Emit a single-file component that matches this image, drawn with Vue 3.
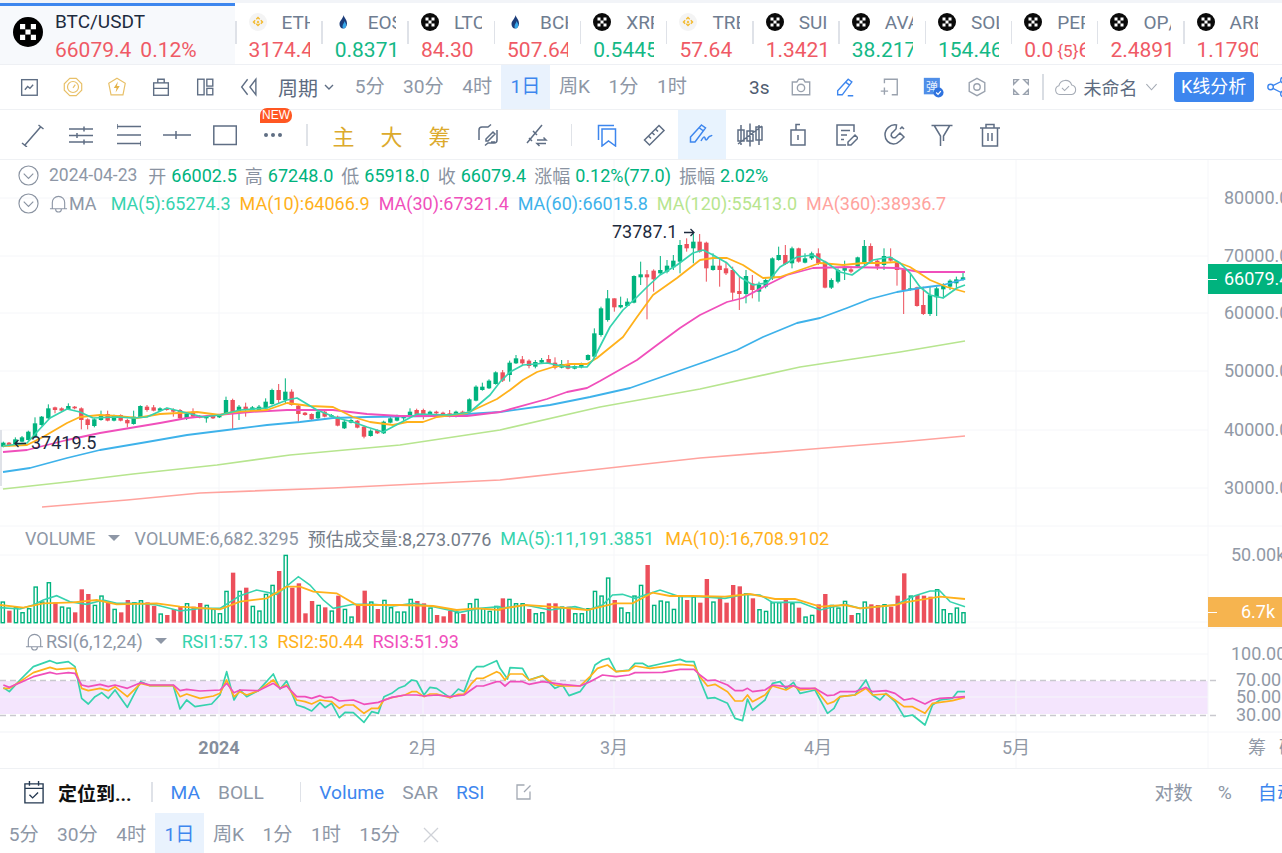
<script setup>
const tickers = [
  { n: 'ETH', p: '3174.4', c: 'r', i: 'bn' }, { n: 'EOS', p: '0.8371', c: 'g', i: 'hb' },
  { n: 'LTC', p: '84.30', c: 'r', i: 'ok' }, { n: 'BCH', p: '507.64', c: 'r', i: 'hb' },
  { n: 'XRP', p: '0.5445', c: 'g', i: 'ok' }, { n: 'TRB', p: '57.64', c: 'r', i: 'bn' },
  { n: 'SUI', p: '1.3421', c: 'r', i: 'ok' }, { n: 'AVAX', p: '38.217', c: 'g', i: 'ok' },
  { n: 'SOL', p: '154.46', c: 'g', i: 'ok' }, { n: 'PEPE', p: '0.0', s: '{5}', t: '6', c: 'r', i: 'ok' },
  { n: 'OP/', p: '2.4891', c: 'r', i: 'ok' }, { n: 'ARB', p: '1.1790', c: 'r', i: 'ok' }
]
const periods = ['5分', '30分', '4时', '1日', '周K', '1分', '1时']
const bottomPeriods = ['5分', '30分', '4时', '1日', '周K', '1分', '1时', '15分']

// candles: [zoomX, up(1)/down(0), bodyTop, bodyBottom, wickTop, wickBottom]
const A = [[10,1,848,860,845,862],[27,0,848,858,846,860],[46,1,838,855,832,858],[66,1,832,845,828,847],[85,1,815,840,812,842],[105,1,790,830,772,832],[125,1,770,795,768,797],[145,1,745,775,733,777],[165,0,742,750,740,760],[185,0,745,752,742,754],[205,1,738,748,730,750],[224,0,740,745,738,748],[244,0,745,780,742,808],[263,0,778,795,775,808],[283,1,778,798,775,802],[303,1,765,780,752,782],[323,0,762,782,752,784],[342,1,768,782,764,784],[362,0,765,782,763,784],[382,0,780,790,776,802],[401,1,770,792,752,794],[421,1,738,772,736,774],[441,0,740,750,735,755],[461,0,742,752,735,754],[480,1,745,752,742,754],[500,0,745,750,743,752],[520,0,750,755,745,770],[540,0,750,775,747,777],[560,1,760,775,757,780],[579,0,755,770,745,772],[599,0,768,773,765,775],[619,1,770,775,767,788],[639,0,765,775,762,777],[658,1,765,772,762,774],[678,1,720,760,710,762],[698,0,720,760,716,808],[717,1,740,755,735,780],[737,0,740,750,728,770],[757,1,742,752,738,756],[777,1,740,750,735,752],[797,1,725,745,715,747],[816,1,690,732,686,734],[836,0,690,720,672,730],[856,1,695,720,655,730],[875,0,695,735,688,737],[895,0,737,762,735,785],[915,0,758,765,756,767],[935,0,762,778,760,782],[954,1,755,775,752,777],[974,0,755,770,752,772],[994,1,765,770,762,772],[1013,0,770,797,767,799],[1033,1,785,805,780,807],[1053,1,780,788,776,790],[1072,0,782,803,780,805],[1092,0,800,830,797,835],[1112,1,812,828,808,830],[1132,0,810,820,808,822],[1151,1,785,820,782,822],[1171,1,775,788,770,790],[1191,1,768,782,764,784],[1211,1,770,775,766,782],[1230,1,755,768,745,770],[1250,0,750,762,746,764],[1270,0,750,770,746,778],[1290,1,755,768,752,770],[1309,0,755,760,752,762],[1329,0,758,765,755,767],[1349,0,760,770,750,772],[1368,1,755,770,752,772],[1388,0,755,760,752,762],[1408,1,718,755,715,757],[1428,1,680,722,676,724],[1447,1,680,690,668,692],[1467,1,662,685,658,687],[1487,1,637,672,634,674]]
const B = [[38,0,97,122,90,126],[59,1,68,105,62,125],[78,1,55,70,45,72],[97,0,58,70,48,75],[117,0,62,78,58,85],[136,1,66,80,60,85],[155,1,60,68,54,70],[176,0,57,70,45,72],[195,0,68,83,52,88],[215,1,72,83,60,85],[234,0,72,86,60,88],[254,1,78,86,76,88],[274,1,75,82,68,85]]
const C = [[24,1,405,420,403,422],[43,1,340,410,325,415],[63,1,265,345,260,350],[83,1,235,300,210,305],[103,0,235,262,235,275],[122,1,255,262,230,265],[142,1,245,258,235,258],[162,1,168,248,166,250],[182,1,163,172,125,195],[201,0,163,172,150,298],[221,0,152,178,148,215],[241,1,150,160,108,165],[261,1,137,155,120,160],[280,1,122,142,105,150],[300,1,75,125,60,160],[320,0,72,85,55,95],[340,1,65,85,40,130],[359,0,65,95,42,98],[379,0,68,145,65,185],[399,1,137,150,100,152],[419,0,137,150,115,200],[438,0,145,160,125,165],[458,0,150,218,140,240],[478,0,213,222,170,270],[498,1,168,222,150,250],[517,0,190,210,165,235],[537,1,195,215,185,245],[557,1,180,200,175,205],[577,1,115,175,112,180],[596,1,105,120,80,122],[616,0,105,132,75,135],[636,1,85,130,80,145],[656,0,85,125,83,128],[675,1,115,128,100,130],[695,1,100,115,95,120],[715,0,100,130,85,135],[735,0,125,203,122,205],[754,1,180,203,175,207],[774,1,150,185,145,190],[794,1,140,152,122,180],[813,0,148,155,140,160],[833,1,112,140,110,142],[853,1,78,130,60,135],[872,0,78,125,70,130],[892,0,122,140,120,150],[912,1,108,135,85,150],[932,0,112,122,85,125],[951,0,125,150,122,197],[971,0,150,210,150,282],[991,1,205,210,160,212],[1011,0,202,258,200,260],[1030,0,255,282,200,285],[1050,1,225,282,200,288],[1070,1,205,232,200,288],[1090,1,198,208,190,235],[1110,1,182,200,178,210],[1129,1,178,190,170,205],[1149,1,172,180,158,182]]
const conv = (list, ox, oy) => list.map(([x, u, t, b, wt, wb]) => ({ x: ox + x / 3, u, t: oy + t / 3, b: oy + b / 3, wt: oy + wt / 3, wb: oy + wb / 3 }))
const candles = [...conv(A, 0, 160), ...conv(B, 490, 340), ...conv(C, 580, 220)]

// volume bars
const V1 = [[1,230],[0,257],[1,247],[1,262],[1,250],[1,185],[1,230],[1,172],[0,232],[1,245],[1,248],[0,262],[0,193],[0,207],[1,240],[1,212],[0,233],[1,252],[0,262],[0,225],[1,232],[1,226],[0,232],[0,243],[1,266],[0,270],[0,252],[0,245],[1,235],[0,245],[0,234],[1,240],[1,252],[1,265],[1,198],[0,143],[1,198],[0,188],[1,243],[1,257],[1,207],[1,180],[0,138],[1,90],[0,188],[0,175],[0,265],[0,228],[1,240],[0,247],[1,257],[0,212],[1,252],[1,275],[0,240],[0,197],[1,230],[0,252],[1,225],[1,247],[1,260],[1,260],[1,222],[0,228],[0,235],[1,248],[0,270],[0,274],[0,258],[1,262],[0,267],[1,235],[1,222],[1,250],[1,258],[1,243]]
const V2 = [[0,220],[1,222],[1,235],[1,235],[0,252],[1,265],[1,262],[0,235],[0,235],[1,245],[0,245],[1,265],[1,265],[1,250],[1,198],[1,212],[1,158],[0,225],[1,248],[1,262],[1,212],[1,180],[0,120],[1,240],[1,227],[1,230],[1,252],[1,212],[0,225],[1,215],[0,233],[0,162],[1,230],[0,215],[0,233],[0,180],[0,184],[1,205],[0,220],[1,253],[1,258],[1,232],[1,232],[0,225],[1,235],[0,248],[1,275],[1,270],[0,238],[0,207],[1,240],[1,248],[1,228],[0,270],[1,265],[1,230],[0,238],[0,240],[1,238],[0,245],[0,212],[0,145],[1,212],[0,210],[0,212],[0,215],[1,193],[1,253],[1,265],[1,248],[1,262]]
const volumes = [...V1, ...V2].map(([u, t], i) => ({ u, x: 2.8 + i * 6.58, t: 525 + t / 3 }))

const zp = (list, ox, sx, oy) => list.map(([x, y]) => [ox + x / sx, oy + y / 3])
const line = pts => pts.map(p => p.join(',')).join(' ')

const ma = [
  { c: '#ffa39e', w: 1.7, p: [[42,507],[127,500],[200,493],[333,488],[500,480],[600,469],[700,458],[800,450],[900,442],[965,436]] },
  { c: '#b7e58f', w: 1.7, p: [[3,489],[67,482],[133,474],[217,465],[290,455],[400,445],[500,430],[600,407],[700,389],[800,367],[853,359],[900,352],[965,341]] },
  { c: '#3eb2ea', w: 1.8, p: [[3,472],[30,468],[67,458],[100,450],[147,442],[187,435],[227,430],[267,425],[300,422],[333,418],[367,417],[433,416],[467,414],[500,412],[550,405],[590,397],[630,388],[670,374],[710,360],[737,350],[763,337],[797,323],[820,318],[847,308],[870,299],[897,292],[920,288],[943,285],[965,279]] },
  { c: '#f04fbb', w: 1.8, p: [[3,452],[27,450],[67,440],[100,433],[130,428],[160,423],[187,418],[217,415],[250,412],[287,410],[333,410],[367,414],[400,416],[467,416],[500,412],[547,399],[567,392],[587,388],[600,381],[637,360],[657,345],[680,328],[700,315],[727,302],[743,298],[767,285],[787,275],[813,268],[847,267],[897,268],[920,272],[965,272]] },
  { c: '#ffb11b', w: 1.8, p: [[3,446],[27,445],[43,437],[67,423],[80,417],[100,415],[117,416],[137,418],[160,414],[197,412],[220,415],[233,412],[267,410],[287,403],[310,406],[333,407],[353,417],[370,422],[393,425],[407,422],[423,422],[437,417],[467,413],[497,399],[510,390],[523,380],[537,372],[553,367],[570,364],[587,364],[597,358],[623,337],[637,317],[653,295],[677,278],[700,260],[713,258],[727,258],[743,265],[763,278],[780,277],[800,270],[820,263],[843,265],[863,263],[880,263],[897,262],[910,267],[930,280],[947,287],[965,292]] },
  { c: '#36d3ae', w: 1.7, p: [[3,446],[27,443],[37,432],[50,418],[67,409],[80,412],[93,418],[117,417],[133,418],[147,417],[167,408],[187,413],[203,417],[220,415],[240,410],[267,408],[287,400],[297,398],[317,410],[337,418],[353,422],[367,427],[383,432],[400,423],[417,414],[450,415],[470,412],[490,395],[500,382],[510,372],[523,365],[547,363],[567,367],[587,367],[593,360],[610,327],[623,310],[637,297],[647,287],[660,275],[677,265],[693,253],[703,250],[713,255],[727,263],[740,277],[753,285],[767,283],[780,267],[797,257],[813,255],[827,263],[840,272],[852,275],[863,267],[873,260],[890,257],[900,263],[910,273],[920,287],[930,295],[943,298],[957,288],[965,285]] }
]
const vol5 = [...zp([[0,248],[60,252],[100,240],[130,225],[170,212],[210,230],[260,238],[310,225],[350,235],[420,235],[470,240],[540,258],[600,250],[660,250],[720,212],[770,195],[830,208],[895,155],[930,180],[970,225],[1000,250],[1060,238],[1120,238],[1180,243],[1240,235],[1300,245],[1380,262],[1440,250],[1500,245]],0,3,525),
  ...zp([[0,250],[50,240],[100,255],[150,245],[175,255],[205,240],[225,210],[245,208],[270,220],[320,195],[360,215],[400,215],[450,220],[490,208],[520,210],[545,232],[600,232],[640,255],[690,238],[720,250],[790,240],[830,212],[860,198],[880,198],[900,230],[930,245]],500,2,525)]
const vol10 = [...zp([[0,240],[70,248],[130,235],[220,232],[290,225],[350,238],[470,235],[540,245],[660,253],[720,230],[800,220],[860,185],[900,185],[940,200],[1010,205],[1070,240],[1200,240],[1300,243],[1370,255],[1430,250],[1500,255]],0,3,525),
  ...zp([[0,252],[50,240],[100,245],[175,255],[230,235],[265,235],[305,203],[340,213],[385,213],[450,215],[500,207],[550,222],[590,222],[640,245],[690,240],[720,250],[790,240],[810,232],[880,215],[930,222]],500,2,525)]
const rsi1 = [...zp([[10,488],[28,500],[60,465],[100,425],[150,407],[170,415],[205,410],[225,425],[245,520],[265,537],[285,515],[305,503],[325,520],[345,495],[382,547],[422,470],[450,482],[520,482],[540,552],[560,525],[585,545],[635,537],[660,510],[680,440],[702,525],[720,495],[740,515],[775,497],[820,447],[840,492],[860,468],[890,540],[915,548],[935,558],[960,533],[975,548],[995,535],[1018,578],[1035,562],[1060,563],[1092,592],[1115,560],[1135,565],[1152,515],[1175,505],[1195,490],[1215,482],[1235,465],[1250,468],[1272,510],[1290,487],[1310,490],[1350,518],[1375,492],[1392,500],[1415,440],[1430,425],[1450,425],[1490,407]],0,3,525),
  ...zp([[0,430],[15,462],[20,428],[45,430],[58,465],[85,452],[110,490],[125,480],[138,512],[160,500],[180,460],[190,420],[205,405],[218,400],[232,440],[258,435],[270,415],[285,415],[297,425],[320,417],[360,403],[372,410],[388,410],[400,465],[415,520],[430,518],[455,535],[470,580],[485,587],[495,522],[505,555],[530,525],[545,475],[560,470],[572,490],[587,472],[600,505],[630,495],[655,565],[668,550],[680,515],[710,510],[732,465],[745,510],[760,525],[772,505],[790,530],[808,575],[825,570],[850,600],[865,540],[880,525],[905,520],[915,500],[930,500]],500,2,525)]
const rsi2 = [...zp([[10,490],[28,490],[60,470],[100,443],[150,427],[170,433],[205,430],[225,430],[245,490],[265,497],[300,490],[325,497],[345,485],[382,515],[422,475],[450,482],[520,482],[540,515],[560,507],[600,520],[640,513],[660,505],[680,465],[702,515],[720,500],[740,510],[775,497],[820,465],[840,490],[860,480],[890,525],[915,530],[935,537],[960,525],[995,530],[1018,550],[1035,540],[1060,540],[1092,565],[1115,550],[1135,550],[1152,525],[1175,518],[1215,510],[1235,500],[1250,500],[1272,515],[1290,507],[1310,507],[1350,518],[1375,508],[1392,508],[1415,475],[1430,460],[1450,460],[1490,440]],0,3,525),
  ...zp([[0,445],[10,465],[20,447],[45,447],[58,465],[85,453],[110,480],[125,483],[160,483],[180,455],[195,430],[215,420],[232,440],[258,437],[270,423],[300,430],[360,418],[388,422],[400,455],[415,483],[430,478],[455,500],[470,528],[485,528],[495,510],[505,530],[530,510],[545,483],[572,495],[587,482],[600,495],[630,490],[655,537],[668,530],[680,515],[710,510],[732,490],[745,510],[772,507],[790,525],[808,545],[825,545],[850,565],[865,535],[905,527],[930,517]],500,2,525)]
const rsi3 = [...zp([[10,480],[28,487],[60,473],[100,455],[150,442],[170,447],[205,443],[225,445],[245,480],[265,485],[300,478],[325,485],[345,480],[382,490],[422,473],[450,480],[520,480],[540,497],[560,493],[600,498],[660,495],[680,475],[702,503],[720,495],[775,497],[820,475],[840,490],[860,483],[890,515],[915,515],[935,520],[960,512],[975,518],[995,516],[1018,528],[1060,525],[1092,538],[1135,532],[1175,517],[1215,510],[1250,510],[1272,513],[1310,510],[1350,515],[1392,510],[1430,483],[1450,483],[1490,470]],0,3,525),
  ...zp([[0,470],[10,483],[20,470],[45,470],[58,478],[85,470],[125,478],[160,483],[180,470],[205,450],[232,455],[258,450],[270,443],[325,442],[360,433],[388,433],[400,450],[415,467],[430,465],[455,480],[470,497],[485,497],[495,490],[505,500],[530,495],[545,480],[572,485],[587,482],[600,490],[630,490],[655,512],[668,510],[680,500],[710,500],[732,487],[745,500],[772,497],[790,505],[808,525],[825,520],[850,537],[865,525],[880,520],[905,518],[930,515]],500,2,525)]
const rsiLines = [{ c: '#36d3ae', p: rsi1 }, { c: '#ffb11b', p: rsi2 }, { c: '#f04fbb', p: rsi3 }]

const vgrid = [219, 423, 614, 818, 1016]
const hgrid = [198, 256, 313, 371, 430, 488, 555, 622, 654, 697, 732]
const axis = [
  { t: '80000.0', x: 1224, y: 198 }, { t: '70000.0', x: 1224, y: 256 }, { t: '60000.0', x: 1224, y: 313 },
  { t: '50000.0', x: 1224, y: 371 }, { t: '40000.0', x: 1224, y: 430 }, { t: '30000.0', x: 1224, y: 488 },
  { t: '50.00k', x: 1231, y: 555 }, { t: '100.00', x: 1231, y: 654 }, { t: '70.00', x: 1236, y: 680 },
  { t: '50.00', x: 1236, y: 697 }, { t: '30.00', x: 1236, y: 715 }
]
const months = [{ t: '2月', x: 423 }, { t: '3月', x: 614 }, { t: '4月', x: 818 }, { t: '5月', x: 1016 }]
</script>

<template>
  <div class="page">
    <header class="tabs">
      <div class="tab-main">
        <svg class="logo-main" viewBox="0 0 32 32"><circle cx="16" cy="16" r="16" fill="#000" /><path fill="#fff" d="M7.500 7.500h5.500v5.500h-5.500zM19 7.500h5.500v5.500h-5.500zM13.250 13.250h5.500v5.500h-5.500zM7.500 19h5.500v5.500h-5.500zM19 19h5.500v5.500h-5.500z" /></svg>
        <div class="main-text">
          <div class="main-name">BTC/USDT</div>
          <div class="main-price"><span>66079.4</span><span>0.12%</span></div>
        </div>
      </div>
      <div v-for="t in tickers" :key="t.n" class="tab">
        <div class="tab-body">
          <div class="tab-top">
            <svg class="coin" viewBox="0 0 18 18">
              <template v-if="t.i === 'ok'">
                <circle cx="9" cy="9" r="9" fill="#0a0a0a" /><path fill="#fff" d="M4.500 4.500h3v3h-3zM10.500 4.500h3v3h-3zM7.500 7.500h3v3h-3zM4.500 10.500h3v3h-3zM10.500 10.500h3v3h-3z" />
              </template>
              <template v-else-if="t.i === 'bn'">
                <circle cx="9" cy="9" r="9" fill="#f4f4f4" /><path fill="#f3ba2f" d="M9 3.500l2.200 2.200-1 1L9 5.500 7.800 6.700l-1-1zM5.700 6.800l1 1L5.500 9l1.200 1.200-1 1L3.500 9zM12.300 6.800L14.500 9l-2.200 2.200-1-1L12.500 9l-1.200-1.200zM9 7.600L10.400 9 9 10.400 7.600 9zM6.800 11.300l1 -1L9 11.500l1.200-1.200 1 1L9 13.500z" />
              </template>
              <template v-else>
                <path fill="#1c3d7a" d="M8.500 2c.5 2.500 3.500 4.500 3.500 8.500 0 3-2 5-4 5s-3.500-2-3.500-4.500C4.500 7.500 8 6 8.500 2z" /><path fill="#37a6e8" d="M9.500 8c.5 1.500 1.800 2.300 1.800 4.300 0 1.800-1.200 3.200-2.300 3.200-.8 0-1.500-1-1.500-2 0-2 1.800-3.500 2-5.500z" />
              </template>
            </svg>
            <span class="coin-name">{{ t.n }}</span>
          </div>
          <div class="coin-price" :class="t.c">{{ t.p }}<span v-if="t.s" class="sub">{{ t.s }}</span>{{ t.t }}</div>
        </div>
      </div>
    </header>

    <div class="bar-a">
      <button class="ib"><svg viewBox="0 0 24 24"><rect class="s" x="4" y="4" width="17" height="17" /><path class="s" d="M7.500 15l3-3.500 2.500 2 3.500-4" /></svg></button>
      <button class="ib"><svg viewBox="0 0 24 24"><path class="gold" d="M8.500 2.500h7l6 6v7l-6 6h-7l-6-6v-7z" /><circle class="gold" cx="12" cy="12" r="6" /><path class="gold" d="M12 13l2.500-3.500" /></svg></button>
      <button class="ib"><svg viewBox="0 0 24 24"><path class="gold" d="M12 2.500l9 5.500-2.500 12.500h-13L3 8z" /><path class="gfill" d="M13 6l-4.500 7h3l-1 5 4.500-7h-3z" /></svg></button>
      <button class="ib"><svg viewBox="0 0 24 24"><rect class="s" x="4" y="7.500" width="16" height="13.500" /><path class="s" d="M8.500 7.500V3.500h7v4M4 13.500h16" /></svg></button>
      <button class="ib"><svg viewBox="0 0 24 24"><rect class="s" x="4" y="3.500" width="7" height="17" /><rect class="s" x="14" y="3.500" width="6.500" height="7.500" /><rect class="s" x="14" y="13.500" width="6.500" height="7" /></svg></button>
      <button class="ib"><svg viewBox="0 0 24 24"><path class="s" d="M10.500 3.500L4 12l6.500 8.500M19.500 3.500L13 12l6.500 8.500z" /></svg></button>
      <span class="cycle">周期<svg class="chev" viewBox="0 0 12 12"><path d="M2 4l4 4 4-4" /></svg></span>
      <div class="periods">
        <span v-for="p in periods" :key="p" class="pd" :class="{ on: p === '1日' }">{{ p }}</span>
      </div>
      <span class="three">3s</span>
      <button class="ib2"><svg viewBox="0 0 24 24"><path class="l" d="M2.500 6.500h5l2-3h5l2 3h5v14h-19z" /><circle class="l" cx="12" cy="13" r="4" /></svg></button>
      <button class="ib2"><svg viewBox="0 0 24 24"><path class="b" d="M15.500 3.500l4 3L9 20.500H4v-4.500zM13 7l4 3M15 21.500h6" /></svg></button>
      <button class="ib2"><svg viewBox="0 0 24 24"><path class="l2" d="M7 8V3.500h14v17h-6M3 16.500h8M7 12.500v8" /></svg></button>
      <button class="ib2 bdg"><svg viewBox="0 0 24 24"><rect x="2" y="2" width="17.500" height="18" fill="#4f8ee8" /><text x="10.800" y="16" text-anchor="middle" class="dan">弹</text><circle cx="18" cy="18" r="5.500" fill="#2f73df" /><path d="M15.500 18l2 2 3-3.500" fill="none" stroke="#fff" stroke-width="1.400" /></svg></button>
      <button class="ib2"><svg viewBox="0 0 24 24"><path class="l" d="M12 2.500l8.500 4.700v9.600L12 21.500l-8.500-4.700V7.200z" /><circle class="l" cx="12" cy="12" r="3.500" /></svg></button>
      <button class="ib2"><svg viewBox="0 0 24 24"><path class="l" d="M4 9V4h5L4 9zM20 9V4h-5zM4 15v5h5zM20 15v5h-5z" /></svg></button>
      <i class="vsep"></i>
      <svg class="cloud" viewBox="0 0 26 22"><path d="M6.500 19.500a5 5 0 0 1-1-9.800 7.500 7.500 0 0 1 14.500-1 5.500 5.500 0 0 1 0 10.800z" /><path d="M9 12l3 3 5-5" /></svg>
      <span class="unnamed">未命名</span>
      <svg class="chev2" viewBox="0 0 14 12"><path d="M1.500 3l5.500 6 5.500-6" /></svg>
      <span class="kbtn">K线分析</span>
      <svg class="share" viewBox="0 0 24 24"><circle cx="5" cy="12" r="3" /><circle cx="19" cy="4.500" r="3" /><circle cx="19" cy="19.500" r="3" /><path d="M7.500 10.500L16.500 6M7.500 13.500l9 4.500" /></svg>
    </div>

    <div class="bar-b">
      <button class="ic"><svg viewBox="0 0 24 24"><path class="s" d="M3.500 22.500L20 3.500M17.500 2l5 4M1 20l5 4" /></svg></button>
      <button class="ic"><svg viewBox="0 0 24 24"><path class="s" d="M0 6h24M0 12.500h24M0 19h24M15 3.500v5M8 10v5M15 16.500v5" /></svg></button>
      <button class="ic"><svg viewBox="0 0 24 24"><path class="s" d="M0 3.500h24M0 12h24M0 20.500h24M0 1v5M24 18v5" /></svg></button>
      <button class="ic"><svg class="w" viewBox="0 0 28 24"><path class="s" d="M0 12h28M13 8v8" /></svg></button>
      <button class="ic"><svg viewBox="0 0 24 24"><rect class="s" x="0.800" y="3" width="22.500" height="18.500" /></svg></button>
      <button class="ic"><svg viewBox="0 0 24 24"><circle class="dot" cx="5" cy="12" r="2" /><circle class="dot" cx="12" cy="12" r="2" /><circle class="dot" cx="19" cy="12" r="2" /></svg><span class="newb">NEW</span></button>
      <i class="vsep2 first"></i>
      <span class="gt g1">主</span><span class="gt">大</span><span class="gt">筹</span>
      <button class="ic"><svg viewBox="0 0 24 24"><path class="s" d="M15 1.500L12 4h-6a3 3 0 0 0-3 3v10M21 7v10a3 3 0 0 1-3 3h-6l-3 2.500M10 16l7-7 2 2-7 7H10zM15 19h4" /></svg></button>
      <button class="ic"><svg viewBox="0 0 24 24"><path class="s" d="M3 20L18 2M9 8l4 4M5 15l3 3M13 17h9l-2.500-2.500M22 20.500h-9l2.500 2.500" /></svg></button>
      <i class="vsep2"></i>
      <button class="ic"><svg viewBox="0 0 24 24"><path class="b" d="M4.500 17V2.500H20M8 6h13.500v17L14.500 18 8 23z" /></svg></button>
      <button class="ic"><svg viewBox="0 0 24 24"><path class="s" d="M17 2.500l5 5L7.500 22l-5-5zM6.500 13l2.500 2.500M10 9.500l2.500 2.500M13.500 6l2.500 2.500" /></svg></button>
      <button class="ic act"><svg class="w" viewBox="0 0 28 24"><path class="b" d="M13.500 2l4 3L7 19H2.500v-5zM11.500 5l4 3M13 18c2-4 3.500-5 4-3s1 3 3 0 3-1 4-3" /></svg></button>
      <button class="ic"><svg class="w" viewBox="0 0 28 24"><path class="s" d="M5 2v20M14 0.500v23M23 2v20M2 7h6v11H2zM11 8h6v10h-6zM20 4h6v13h-6zM2 21L26 3" /></svg></button>
      <button class="ic"><svg viewBox="0 0 24 24"><path class="s" d="M5 7h14v15H5zM10 7V1.500h4M12 12v5" /></svg></button>
      <button class="ic"><svg viewBox="0 0 24 24"><path class="s" d="M20 9V2H3v20h9M7 7.500h9M7 12h6M7 16.500h3M14 22v-3l7-7 3 3-7 7z" /></svg></button>
      <button class="ic"><svg viewBox="0 0 24 24"><path class="s" d="M14.500 2A10 10 0 0 0 3 12c0 5 4 9 8.500 9 3 0 5-1.500 6.500-3l4-4-4-4-4.500 4.500a3 3 0 0 1-4-4l4.500-4.500zM18 6l2-2 2 2" /></svg></button>
      <button class="ic"><svg viewBox="0 0 24 24"><path class="s" d="M1.500 2.500h21M4.500 3l6 10v10M19.500 3l-6 10v5" /></svg></button>
      <button class="ic"><svg viewBox="0 0 24 24"><path class="s" d="M2 5h20M8 5V1.500h8V5M4.500 5v18h15V5M10 10v8M14 10v8" /></svg></button>
    </div>

    <main class="chart">
      <svg class="plot" width="1282" height="608" viewBox="0 160 1282 608">
        <rect x="0" y="681" width="1208" height="33" fill="#f4e5fd" />
        <g class="grid">
          <line v-for="y in hgrid" :key="'h' + y" x1="0" x2="1208" :y1="y" :y2="y" />
          <line v-for="x in vgrid" :key="'v' + x" :x1="x" :x2="x" y1="160" y2="768" />
          <line x1="1208" x2="1208" y1="160" y2="768" />
          <line x1="0" x2="1282" y1="526" y2="526" />
          <line x1="0" x2="1282" y1="628" y2="628" />
          <line x1="0" x2="1282" y1="732" y2="732" />
        </g>
        <line x1="0" x2="1217" y1="680.500" y2="680.500" class="dash" />
        <line x1="0" x2="1217" y1="715.500" y2="715.500" class="dash" />
        <rect x="0" y="430" width="2" height="56" fill="#dfe2e8" />

        <g v-for="(c, i) in candles" :key="'c' + i" :class="c.u ? 'up' : 'down'">
          <line :x1="c.x" :x2="c.x" :y1="c.wt" :y2="c.wb" class="wick" />
          <rect :x="c.x - 2.200" :y="c.t" width="4.400" :height="c.b - c.t" />
        </g>
        <polyline v-for="m in ma" :key="m.c" :points="line(m.p)" :stroke="m.c" :stroke-width="m.w" fill="none" stroke-linejoin="round" />

        <g v-for="(v, i) in volumes" :key="'v' + i">
          <rect v-if="v.u" :x="v.x - 1.600" :y="v.t + .4" width="3.200" :height="622.300 - v.t" class="vup" />
          <rect v-else :x="v.x - 2.200" :y="v.t" width="4.400" :height="622.700 - v.t" fill="#ec4f5b" />
        </g>
        <polyline :points="line(vol5)" stroke="#36d3ae" stroke-width="1.600" fill="none" />
        <polyline :points="line(vol10)" stroke="#ffb11b" stroke-width="1.800" fill="none" />

        <polyline v-for="r in rsiLines" :key="r.c" :points="line(r.p)" :stroke="r.c" stroke-width="1.700" fill="none" stroke-linejoin="round" />

        <text class="note" x="612" y="238">73787.1</text>
        <path class="arrow" d="M684 232.500h10M690.500 229l3.500 3.500-3.500 3.500" />
        <text class="note" x="31" y="449">37419.5</text>
        <path class="arrow" d="M26 443.500H15M18.500 440L15 443.500l3.500 3.500" />

        <g class="ax">
          <text v-for="a in axis" :key="a.t + a.y" :x="a.x" :y="a.y + 6">{{ a.t }}</text>
          <text v-for="m in months" :key="m.t" :x="m.x" y="754" text-anchor="middle">{{ m.t }}</text>
          <text x="219" y="754" text-anchor="middle" class="yr">2024</text>
          <text x="1248" y="754">筹</text>
          <text x="1279" y="754">码</text>
        </g>
        <rect x="1208" y="264" width="74" height="30" fill="#00b37e" />
        <line x1="1208" x2="1217" y1="279.500" y2="279.500" stroke="#fff" />
        <text x="1224" y="285" class="tag">66079.4</text>
        <rect x="1208" y="597" width="74" height="30" fill="#f6b44f" />
        <line x1="1208" x2="1217" y1="612.500" y2="612.500" stroke="#fff" />
        <text x="1241" y="618" class="tag">6.7k</text>
      </svg>

      <div class="lg lg1">
        <svg class="cc" viewBox="0 0 22 22"><circle cx="11" cy="11" r="10" /><path d="M6 9l5 5 5-5" /></svg>
        <span class="date">2024-04-23</span>
        <span class="k">开</span><span class="gv">66002.5</span>
        <span class="k">高</span><span class="gv">67248.0</span>
        <span class="k">低</span><span class="gv">65918.0</span>
        <span class="k">收</span><span class="gv">66079.4</span>
        <span class="k">涨幅</span><span class="gv">0.12%(77.0)</span>
        <span class="k">振幅</span><span class="gv">2.02%</span>
      </div>
      <div class="lg lg2">
        <svg class="cc" viewBox="0 0 22 22"><circle cx="11" cy="11" r="10" /><path d="M6 9l5 5 5-5" /></svg>
        <svg class="bell" viewBox="0 0 20 20"><path d="M1 15.500h18M3.500 15.500V9a6.500 6.500 0 0 1 13 0v6.500M7 16a3 3 0 0 0 6 0" /></svg>
        <span class="name">MA</span>
        <span class="m5">MA(5):65274.3</span>
        <span class="m10">MA(10):64066.9</span>
        <span class="m30">MA(30):67321.4</span>
        <span class="m60">MA(60):66015.8</span>
        <span class="m120">MA(120):55413.0</span>
        <span class="m360">MA(360):38936.7</span>
      </div>
      <div class="lg lg3">
        <span class="name">VOLUME</span>
        <i class="tri"></i>
        <span class="name">VOLUME:6,682.3295</span>
        <span class="est">预估成交量:8,273.0776</span>
        <span class="m5">MA(5):11,191.3851</span>
        <span class="m10">MA(10):16,708.9102</span>
      </div>
      <div class="lg lg4">
        <svg class="bell" viewBox="0 0 20 20"><path d="M1 15.500h18M3.500 15.500V9a6.500 6.500 0 0 1 13 0v6.500M7 16a3 3 0 0 0 6 0" /></svg>
        <span class="name">RSI(6,12,24)</span>
        <i class="tri"></i>
        <span class="m5">RSI1:57.13</span>
        <span class="m10">RSI2:50.44</span>
        <span class="m30">RSI3:51.93</span>
      </div>
    </main>

    <div class="foot">
      <svg class="cal" viewBox="0 0 22 26"><path d="M1 4h20v21H1zM1 9h20M6 1v5M16 1v5M6 16l3.500 3.500 6-6" /></svg>
      <b class="loc">定位到...</b>
      <i class="fs s1"></i>
      <span class="bl ma">MA</span><span class="fg boll">BOLL</span>
      <i class="fs s2"></i>
      <span class="bl vol">Volume</span><span class="fg sar">SAR</span><span class="bl rsi">RSI</span>
      <svg class="ext" viewBox="0 0 16 16"><path d="M14 7.500V15H1V1h7.500M14.500 1.500L8 8" /></svg>
      <span class="fg log">对数</span><span class="fg pct">%</span><span class="bl auto">自动</span>
    </div>
    <div class="quick">
      <span v-for="p in bottomPeriods" :key="p" class="qp" :class="{ on: p === '1日' }">{{ p }}</span>
      <svg class="x" viewBox="0 0 16 16"><path d="M1 1l14 14M15 1L1 15" /></svg>
    </div>
  </div>
</template>

<style>
html, body { margin: 0; background: #fff; overflow: hidden; }
</style>

<style scoped>
.page { width: 1282px; height: 853px; overflow: hidden; display: flex; flex-direction: column; background: #fff; color: #8e97a6; font-family: Roboto, "Noto Sans CJK SC", sans-serif; font-size: 18px; }
button { border: 0; background: none; padding: 0; display: flex; align-items: center; justify-content: center; }
svg { display: block; }
.s, .l, .l2, .b, .gold { fill: none; stroke-width: 1.5; }
.s { stroke: #5f6e84; }
.l, .l2 { stroke: #9aa2ae; }
.b { stroke: #3d86ee; }
.gold { stroke: #e8c068; stroke-width: 1.3; }
.gfill { fill: #e5b44a; }
.dot { fill: #5f6e84; }

.tabs { height: 65px; flex: none; box-sizing: border-box; padding-top: 3px; background: linear-gradient(#f2f4f8 3px, #fff 3px); border-bottom: 1px solid #eef0f4; display: flex; overflow: hidden; }
.tab-main { width: 235px; flex: none; box-sizing: border-box; border-top: 3px solid #3d86ee; background: #f7f9fc; display: flex; padding-left: 13px; }
.logo-main { width: 30px; height: 30px; margin-top: 11px; }
.main-text { margin-left: 12px; }
.main-name { font-size: 19px; line-height: 26px; margin-top: 3px; color: #1d2b3e; }
.main-price { font-size: 21px; line-height: 28px; margin-top: 1px; color: #ef5a65; display: flex; gap: 9px; white-space: nowrap; }
.tab { width: 86.200px; flex: none; box-sizing: border-box; position: relative; padding-left: 13.500px; }
.tab::before { content: ""; position: absolute; left: 0; top: 18px; height: 23px; width: 1.500px; background: #dfe2e8; }
.tab-body { width: 61px; overflow: hidden; white-space: nowrap; }
.tab-top { display: flex; align-items: center; height: 26px; margin-top: 6px; }
.coin { width: 18px; height: 18px; flex: none; }
.coin-name { margin-left: 15px; font-size: 19px; color: #6f7d91; }
.coin-price { font-size: 21px; line-height: 28px; margin-top: 1px; }
.coin-price.r { color: #ef5a65; }
.coin-price.g { color: #14b886; }
.sub { font-size: 17px; margin: 0 0 0 4px; }

.bar-a { height: 45px; flex: none; box-sizing: border-box; display: flex; align-items: center; padding-left: 7px; border-bottom: 1px solid #eff1f4; white-space: nowrap; }
.ib { width: 44px; height: 44px; flex: none; }
.ib svg { width: 22px; height: 22px; }
.cycle { margin-left: 7px; color: #5d6b7f; display: flex; align-items: center; font-size: 20px; width: 57px; flex: none; }
.chev { width: 12px; height: 12px; margin-left: 5px; fill: none; stroke: #5f6e84; stroke-width: 1.4; }
.periods { display: flex; margin-left: 10.500px; font-size: 19.200px; }
.pd { padding: 0 9.200px; line-height: 44px; color: #8e97a6; }
.pd.on { color: #3d86ee; background: #e9f2fd; }
.three { margin-left: 53px; color: #4f5c70; width: 21px; flex: none; font-size: 19px; }
.ib2 { width: 44px; height: 44px; flex: none; }
.ib2 svg { width: 22px; height: 22px; }
.three + .ib2 { margin-left: 9px; }
.dan { font-size: 13px; fill: #e8f0fd; font-family: "Noto Sans CJK SC", sans-serif; }
.vsep { width: 1.500px; height: 26px; background: #d9dde3; margin-left: -1px; margin-right: 10px; flex: none; }
.cloud { width: 23px; height: 20px; fill: none; stroke: #a5abb5; stroke-width: 1.2; flex: none; }
.unnamed { color: #5d6b7f; margin-left: 7px; font-size: 18px; }
.chev2 { width: 13px; height: 12px; margin-left: 7px; fill: none; stroke: #a5abb5; stroke-width: 1.2; flex: none; }
.kbtn { margin-left: 16px; width: 80px; height: 30px; line-height: 30px; background: #3d86ee; color: #fff; border-radius: 3px; text-align: center; font-size: 18px; flex: none; }
.share { width: 22px; height: 22px; margin-left: 12px; flex: none; fill: none; stroke: #3d86ee; stroke-width: 1.5; }

.bar-b { height: 50px; flex: none; box-sizing: border-box; display: flex; align-items: center; padding-left: 9px; border-bottom: 1px solid #eff1f4; }
.ic { width: 48px; height: 49px; flex: none; position: relative; }
.ic svg { width: 24px; height: 24px; }
.ic svg.w { width: 28px; }
.ic.act { background: #e8f3fe; }
.newb { position: absolute; left: 11px; top: -2px; width: 32px; height: 15px; line-height: 15px; background: #ff5722; color: #fff; font-size: 12px; border-radius: 7px 7px 7px 0; text-align: center; font-weight: 500; }
.vsep2 { width: 1.500px; height: 22px; background: #e0e3e8; flex: none; margin: 0 10px 0 11px; }
.gt { width: 48px; text-align: center; color: #dcaa2c; font-size: 22px; flex: none; }
.vsep2.first { margin: 0 12px 0 9px; }

.chart { height: 609px; flex: none; position: relative; border-bottom: 1px solid #eff1f4; box-sizing: border-box; overflow: hidden; }
.plot { position: absolute; left: 0; top: 0; font-family: Roboto, "Noto Sans CJK SC", sans-serif; }
.grid line { stroke: #f5f6f9; stroke-width: 1; }
.dash { stroke: #c9c9cf; stroke-width: 1.300; stroke-dasharray: 6 4; }
.up rect { fill: #00b37e; }
.up .wick { stroke: #00b37e; }
.down rect { fill: #ec4f5b; }
.down .wick { stroke: #ec4f5b; }
.wick { stroke-width: 1; }
.vup { fill: #fff; stroke: #00b37e; stroke-width: 1.400; }
.note { font-size: 18px; fill: #1d2b3e; }
.arrow { fill: none; stroke: #1d2b3e; stroke-width: 1.300; }
.ax text { font-size: 18px; fill: #9199a6; }
.ax .yr { font-weight: 700; fill: #858e9c; }
.tag { font-size: 18px; fill: #fff; }

.lg { position: absolute; display: flex; align-items: center; white-space: nowrap; height: 24px; font-size: 18px; }
.lg1 { left: 18px; top: 3px; }
.lg2 { left: 18px; top: 31px; }
.lg3 { left: 25px; top: 366px; }
.lg4 { left: 25px; top: 469px; }
.cc { width: 21px; height: 21px; fill: none; stroke: #8a93a1; stroke-width: 1.200; margin-right: 10px; }
.date { margin-right: 11px; font-size: 17.500px; }
.k { color: #8a93a1; margin-right: 5px; }
.gv { color: #00b37e; margin-right: 8px; }
.bell { width: 19px; height: 19px; fill: none; stroke: #8e97a6; stroke-width: 1.200; }
.name { color: #8e97a6; }
.lg2 .name { margin: 0 14px 0 1px; }
.m5 { color: #36d3ae; }
.m10 { color: #ffb11b; }
.m30 { color: #f04fbb; }
.m60 { color: #3eb2ea; }
.m120 { color: #b7e58f; }
.m360 { color: #ffa39e; }
.lg2 span + span, .lg3 span + span, .lg4 span + span { margin-left: 9px; }
.lg2 .name + span { margin-left: 0; }
.lg3 .m10 { margin-left: 11px; }
.tri { width: 0; height: 0; border: 6px solid transparent; border-top: 6px solid #8e97a6; border-bottom: 0; margin: 0 15px 0 12px; }
.lg3 .tri + span, .lg4 .tri + span { margin-left: 0; }
.lg4 .name { margin-left: 2px; }
.est { color: #757d8a; }

.foot { height: 44px; flex: none; box-sizing: border-box; padding-top: 2px; position: relative; display: flex; align-items: center; white-space: nowrap; padding-left: 24px; font-size: 19.200px; }
.cal { width: 20px; height: 24px; fill: none; stroke: #253951; stroke-width: 1.500; flex: none; }
.loc { margin-left: 14px; color: #111; font-weight: 700; width: 75px; font-size: 19px; flex: none; }
.fs { width: 1.500px; height: 20px; background: #dfe2e8; flex: none; }
.s1 { margin-left: 18px; }
.bl { color: #3d86ee; }
.fg { color: #8e97a6; }
.ma { margin-left: 18px; }
.boll { margin-left: 18px; }
.s2 { margin-left: 36px; }
.vol { margin-left: 18px; }
.sar { margin-left: 18px; }
.rsi { margin-left: 18px; }
.ext { width: 16px; height: 16px; margin-left: 32px; fill: none; stroke: #a3a9b3; stroke-width: 1.300; flex: none; }
.log { margin-left: 622px; }
.pct { margin-left: 25px; }
.auto { margin-left: 26px; }

.quick { height: 40px; flex: none; display: flex; align-items: stretch; white-space: nowrap; font-size: 19.200px; margin-left: -0.500px; }
.qp { padding: 0 9.200px; line-height: 44px; color: #8e97a6; }
.qp.on { color: #3d86ee; background: #e9f2fd; }
.x { width: 16px; height: 16px; margin: 14px 0 0 14px; fill: none; stroke: #cfd2d8; stroke-width: 1.300; }
</style>
